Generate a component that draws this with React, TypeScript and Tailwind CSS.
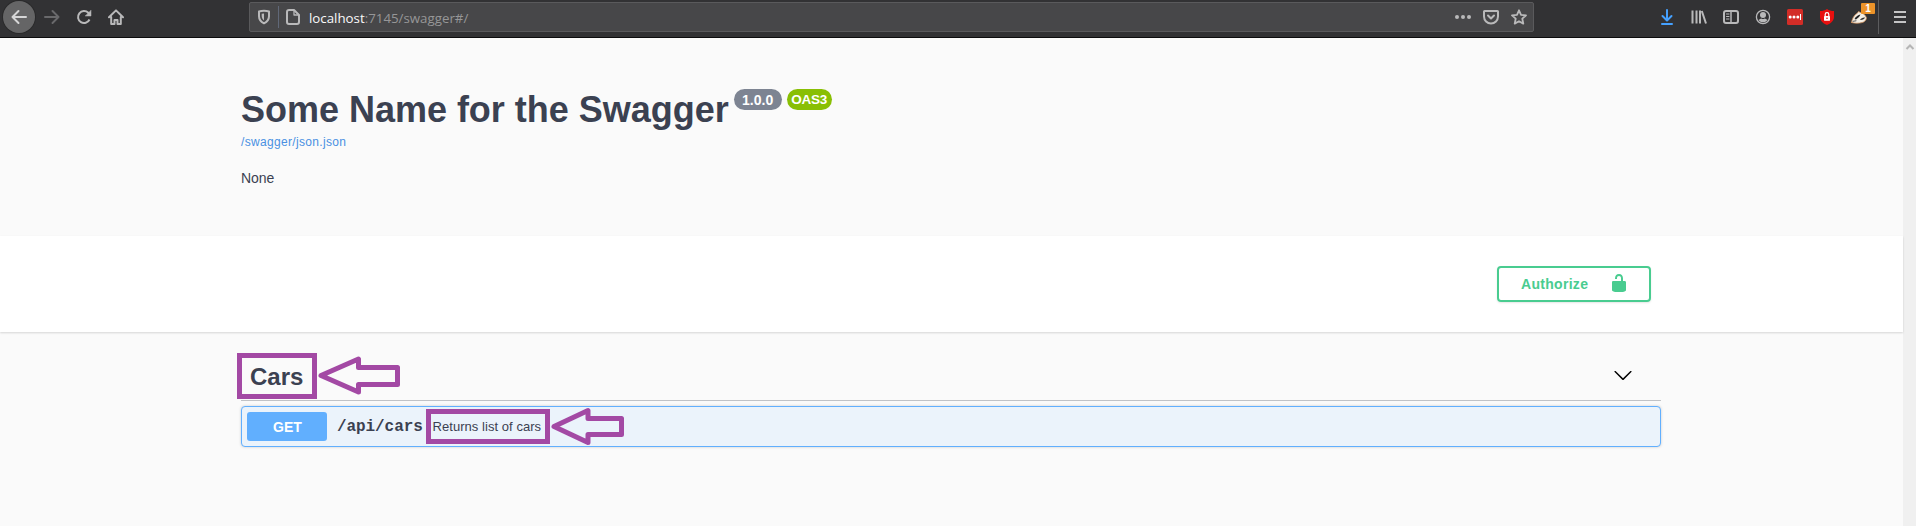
import type { ReactNode } from "react";

function Cell({ children }: { children: ReactNode }) {
  return <div className="relative flex h-[34px] w-8 shrink-0 items-center justify-center">{children}</div>;
}

function Glyph({ children, className = "text-[#b9b9ba]" }: { children: ReactNode; className?: string }) {
  return (
    <svg
      viewBox="0 0 16 16"
      className={"block h-4 w-4 shrink-0 " + className}
      fill="none"
      stroke="currentColor"
      strokeWidth="2"
      strokeLinecap="round"
      strokeLinejoin="round"
    >
      {children}
    </svg>
  );
}

function BrowserBar() {
  return (
    <header className="flex h-[38px] w-full shrink-0 items-start border-b border-[#0c0c0d] bg-[#323234]">
      <div className="mt-px ml-[3px] flex h-8 w-8 items-center justify-center rounded-full bg-[#656566] ring-1 ring-[#2a2a2b]">
        <Glyph className="text-[#d6d6d7]">
          <path d="M15 8H1.5M7.5 2 1.5 8l6 6" />
        </Glyph>
      </div>
      <div className="ml-px flex">
        <Cell>
          <Glyph className="text-[#69696b]">
            <path d="M1 8h13.5M8.500 2l6 6-6 6" />
          </Glyph>
        </Cell>
        <Cell>
          <Glyph>
            <path d="M13.500 10.500A6 6 0 1 1 12.300 3.800L14 5.500" strokeLinecap="butt" />
            <path d="M15 1.500V7H9.500z" fill="currentColor" strokeWidth="0.500" />
          </Glyph>
        </Cell>
        <Cell>
          <Glyph>
            <path d="M1 8.300 8 1.400l7 6.900M3.200 8v7h3.300v-4h3v4h3.300V8" />
          </Glyph>
        </Cell>
      </div>

      <div className="mt-[2px] ml-[117px] flex h-[30px] w-[1285px] items-center rounded-[2px] border border-[#5a5a5c] bg-[#474749]">
        <div className="ml-[6px] flex">
          <Glyph>
            <path d="M8 1.700c1.800 0 3.600.3 5 .8v4.700c0 3-1.700 5.400-5 7.100-3.300-1.700-5-4.100-5-7.100V2.500c1.400-.5 3.200-.8 5-.8z" />
            <path d="M8 4.500v7C6.500 10.300 5.700 8.900 5.700 7V4.800z" fill="currentColor" stroke="none" />
          </Glyph>
        </div>
        <div className="ml-[6px] h-[22px] w-px bg-[#606878]" />
        <div className="ml-[6px]">
          <Glyph>
            <path d="M4 1h5l5 5v7a2 2 0 0 1-2 2H4a2 2 0 0 1-2-2V3a2 2 0 0 1 2-2z" />
            <path d="M9 1.500V6h4.500" strokeWidth="1.300" />
          </Glyph>
        </div>
        <span className="mt-px ml-2 font-['Open_Sans','Noto_Sans',sans-serif] text-[13.300px] leading-[20px] whitespace-nowrap text-[#969697]">
          <span className="text-[#f9f9fa]">localhost</span>:7145/swagger#/
        </span>
        <div className="mr-[6px] ml-auto flex gap-3">
          <Glyph>
            <g fill="currentColor" stroke="none">
              <circle cx="2" cy="8" r="2" />
              <circle cx="8" cy="8" r="2" />
              <circle cx="14" cy="8" r="2" />
            </g>
          </Glyph>
          <Glyph>
            <path d="M1.500 2h13a.5.5 0 0 1 .5.5V7.500a7 7 0 0 1-14 0V2.500a.5.5 0 0 1 .5-.5z" />
            <path d="M5 6.500l3 3 3-3" />
          </Glyph>
          <Glyph>
            <path
              d="M8 1.300l2 4.500 5 .6-3.700 3.300 1 4.900L8 12.200l-4.300 2.400 1-4.900L1 6.400l5-.6z"
              strokeWidth="1.800"
            />
          </Glyph>
        </div>
      </div>

      <div className="ml-[117px] flex">
        <Cell>
          <Glyph className="text-[#45a1ff]">
            <path d="M8 1v10M3.500 7l4.500 4.500L12.500 7M3 15h10" />
          </Glyph>
        </Cell>
        <Cell>
          <Glyph>
            <path d="M1.500 1.500v13M5.500 1.500v13M9 1.500v13M10.800 2l4.200 12.500" strokeLinecap="butt" />
          </Glyph>
        </Cell>
        <Cell>
          <Glyph>
            <rect x="1" y="2" width="14" height="12" rx="2" />
            <path d="M8 2v12" strokeWidth="1.500" />
            <path d="M3.500 5h2.500M3.500 7.500h2.500M3.500 10h2.500" strokeWidth="1" />
          </Glyph>
        </Cell>
        <Cell>
          <Glyph>
            <circle cx="8" cy="8" r="6.600" strokeWidth="1.300" />
            <circle cx="8" cy="6" r="3" fill="currentColor" stroke="none" />
            <path d="M3.600 11c1-1 1.900-1.500 2.700-1.500.9.700 2.500.7 3.400 0 .8 0 1.700.5 2.700 1.500-1 1.500-2.600 2.300-4.400 2.300S4.600 12.500 3.600 11z" fill="currentColor" stroke="none" />
          </Glyph>
        </Cell>
        <Cell>
          <Glyph>
            <rect width="16" height="16" rx="1.500" fill="#d32d27" stroke="none" />
            <g fill="#fff" stroke="none">
              <circle cx="3.200" cy="8" r="1.500" />
              <circle cx="7" cy="8" r="1.500" />
              <circle cx="10.800" cy="8" r="1.500" />
              <rect x="13" y="5" width="1" height="6" />
            </g>
          </Glyph>
        </Cell>
        <Cell>
          <Glyph>
            <path d="M8 0c2 1.400 4.300 2 7 2v5.500c0 4-2.500 6.500-7 8.500-4.500-2-7-4.500-7-8.500V2c2.700 0 5-.6 7-2z" fill="#e8100f" stroke="none" />
            <rect x="5" y="7" width="6" height="4.700" rx=".4" fill="#fff" stroke="none" />
            <path d="M6.200 7V5.500a1.800 1.800 0 0 1 3.600 0V7" stroke="#fff" strokeWidth="1.200" />
            <circle cx="8" cy="9.200" r=".8" fill="#e8100f" stroke="none" />
          </Glyph>
        </Cell>
        <Cell>
          <Glyph>
            <path d="M.5 13.500C1 10 3 6 6.500 4l1-1.500L9.500 3.500c3 .7 5 2.500 6 5.500-.5 2.500-2 4-4.500 4.600-3 .8-7 1-10.500-.1z" fill="#f4efe6" stroke="#c98b58" strokeWidth=".8" />
            <path d="M3.500 10C5 7.500 7 6 9.500 5.500L8 8 5 10.500z" fill="#222" stroke="none" />
            <path d="M9 11C10 9.500 11.500 8.200 14 8.500c-.5 1.500-2.500 2.800-5 2.500z" fill="#333" stroke="none" />
            <path d="M2 12.300l3-.5" stroke="#555" strokeWidth="1" />
          </Glyph>
          <span className="absolute top-[3px] right-0 flex h-[11px] w-[14px] items-center justify-center rounded-[1px] bg-[#ec9329] font-['Liberation_Sans',sans-serif] text-[10px] leading-none font-bold text-white">
            1
          </span>
        </Cell>
      </div>
      <div className="ml-[3px] h-[34px] w-px bg-[#5c5c5e]" />
      <div className="ml-[13px] flex h-[34px] items-center">
        <Glyph className="text-[#c4c4c5]">
          <path d="M2 3h12M2 8h12M2 13h12" strokeLinecap="butt" />
        </Glyph>
      </div>
    </header>
  );
}

function Info() {
  return (
    <section className="h-[198px] pt-[49px] pl-[241px]">
      <div className="flex items-start">
        <h1 className="mt-px -mb-px text-[36px] leading-[44px] font-bold tracking-[-0.020px] whitespace-nowrap">Some Name for the Swagger</h1>
        <span className="mt-[2px] ml-[5px] flex h-[21px] w-12 items-center justify-center rounded-full bg-[#7d8492] pt-px text-[14px] font-bold text-white">
          1.0.0
        </span>
        <span className="mt-[2px] ml-[5px] flex h-[21px] w-[45px] items-center justify-center rounded-full bg-[#89bf04] pt-px text-[13.500px] font-bold tracking-[-0.200px] text-white">
          OAS3
        </span>
      </div>
      <a className="mt-[3px] block w-fit text-[12px] leading-4 tracking-[0.330px] text-[#4990e2]">/swagger/json.json</a>
      <p className="mt-[18px] text-[14px] leading-5 tracking-[-0.100px]">None</p>
    </section>
  );
}

function AuthBar() {
  return (
    <section className="relative flex h-24 justify-end bg-white pt-[30px] pr-[252px] shadow-[0_1px_2px_0_rgba(0,0,0,0.15)]">
      <button className="flex h-9 w-[154px] items-center rounded-[4px] border-2 border-[#49cc90] pl-[22px] text-[14px] font-bold text-[#49cc90] shadow-[0_1px_2px_rgba(0,0,0,0.1)]">
        <span className="w-[67px] tracking-[0.300px]">Authorize</span>
        <svg viewBox="0 0 20 20" className="-mt-[2px] ml-[21px] h-5 w-5" fill="currentColor">
          <path d="M15.800 8H14V5.600C14 2.703 12.665 1 10 1 7.334 1 6 2.703 6 5.600V6h2v-.801C8 3.754 8.797 3 10 3c1.203 0 2 .754 2 2.199V8H4c-.553 0-1 .646-1 1.199V17c0 .549.428 1.139.951 1.307l1.197.387C5.672 18.861 6.550 19 7.100 19h5.800c.549 0 1.428-.139 1.951-.307l1.196-.387c.524-.167.953-.757.953-1.306V9.199C17 8.646 16.352 8 15.800 8z" />
        </svg>
      </button>
    </section>
  );
}

function Operations() {
  return (
    <section className="flex-1 pt-[21px] pr-[242px] pl-[241px]">
      <div className="relative flex h-[48px] items-center border-b border-[rgba(59,65,81,0.3)]">
        <h2 className="pl-[9px] text-[24px] leading-8 font-bold">Cars</h2>
        <svg viewBox="0 0 20 20" className="-mt-[3px] mr-[28px] ml-auto h-5 w-5 text-black" fill="currentColor">
          <path d="M17.418 6.109c.272-.268.709-.268.979 0s.271.701 0 .969l-7.908 7.830c-.27.268-.707.268-.979 0l-7.908-7.830c-.27-.268-.27-.701 0-.969.271-.268.709-.268.979 0L10 13.250l7.418-7.141z" />
        </svg>
        <div className="absolute top-0 -left-1 h-[46px] w-20 border-5 border-[#a349a4]" />
        <svg
          viewBox="0 0 84 40"
          className="pointer-events-none absolute top-[2px] left-[77px] h-10 w-[84px]"
          fill="none"
          stroke="#a349a4"
          strokeWidth="5"
          strokeLinejoin="round"
        >
          <path d="M3 20.500 40.500 4V12.500H79.500V29.500H40.500V37z" />
        </svg>
      </div>
      <div className="relative mt-[5px] flex h-[41px] items-center rounded-[4px] border border-[#61affe] bg-[#ebf3fb] pl-[5px] shadow-[0_0_3px_rgba(0,0,0,0.19)]">
        <span className="flex h-[29px] w-20 items-center justify-center rounded-[3px] bg-[#61affe] pt-px pl-px text-[14px] font-bold text-white">
          GET
        </span>
        <span className="ml-[10px] w-[95.500px] font-['Liberation_Mono',monospace] text-[16px] font-bold tracking-[-0.080px]">/api/cars</span>
        <span className="text-[13px] tracking-[0.050px] whitespace-nowrap">Returns list of cars</span>
        <div className="absolute top-[2px] left-[184px] h-[35px] w-[124px] border-5 border-[#a349a4]" />
        <svg
          viewBox="0 0 76 40"
          className="pointer-events-none absolute top-0 left-[309px] h-10 w-[76px]"
          fill="none"
          stroke="#a349a4"
          strokeWidth="5"
          strokeLinejoin="round"
        >
          <path d="M3 19.500 37 3.500V11.500H70.500V27.500H37V35.500z" />
        </svg>
      </div>
    </section>
  );
}

export default function App() {
  return (
    <div className="flex h-[526px] w-[1916px] flex-col overflow-hidden bg-[#fafafa] font-['Liberation_Sans',Arial,sans-serif] text-[#3b4151]">
      <BrowserBar />
      <div className="flex min-h-0 flex-1">
        <main className="flex w-[1903px] flex-col">
          <Info />
          <AuthBar />
          <Operations />
        </main>
        <aside className="flex w-[13px] justify-center bg-[#f0f0f0] pt-[5px]">
          <svg viewBox="0 0 10 8" className="h-2 w-[10px]" fill="none" stroke="#b5b5b5" strokeWidth="2">
            <path d="M1.500 6 5 2.500 8.500 6" />
          </svg>
        </aside>
      </div>
    </div>
  );
}
